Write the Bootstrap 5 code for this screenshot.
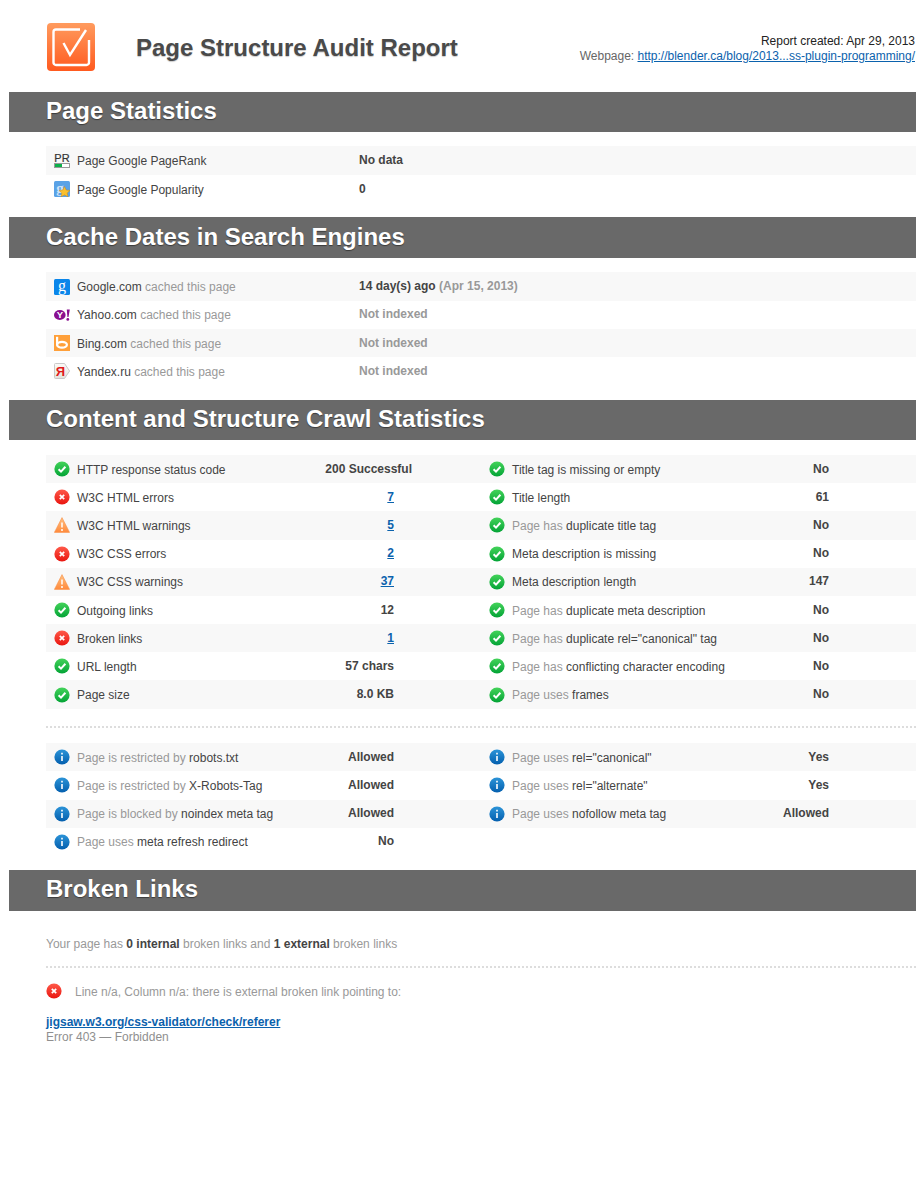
<!DOCTYPE html>
<html lang="en"><head><meta charset="utf-8"><title>Page Structure Audit Report</title>
<link href="https://cdn.jsdelivr.net/npm/bootstrap@5.3.0/dist/css/bootstrap.min.css" rel="stylesheet">
<style>
body{font-family:"Liberation Sans",Arial,sans-serif;font-size:12px;line-height:15px;color:#444;background:#fff}
.sheet{margin:0 8px 0 9px}
.top{height:92px;padding:23px 1px 0 38px}
.brand{width:48px;height:48px;flex:none}
.title{font-size:24px;line-height:50px;font-weight:700;margin:0 0 0 41px;color:#4a4a4a;text-shadow:0 1px 1px #ccc}
.meta{padding-top:11px;color:#222}
.meta .gr{color:#666}
a{color:#0b62ad}
.bar{background:#696969;height:40px;padding-left:37px;margin:0;font-size:24px;line-height:38px;font-weight:700;color:#fff;text-shadow:0 1px 1px rgba(0,0,0,.45)}
.bar2{height:41px}
.bar3{line-height:40px}
.group{margin-left:37px}
.g1{padding:14px 0}
.g2{padding:14.4px 0 14.6px}
.g3{padding-top:15px}
.g4{padding-bottom:13.55px}
.rw{height:28.25px}
.g3 .rw{height:28.2px}
.g1 .rw:first-child{height:29px}
.g1 .rw:last-child{height:28px}
.rw:nth-child(odd){background:#f8f8f8}
.cell{width:435px;flex:none;padding:0 87px 0 8px}
.wide{flex:1 1 auto;padding-right:0}
.ic{width:16px;height:16px;flex:none;margin-right:7px}
.lbl{padding-top:2px;white-space:nowrap}
.keyc{width:282px;flex:none}
.gy{color:#999}
.dk{color:#444}
.val{font-weight:700;white-space:nowrap}
.over{margin-right:-18px}
.dots{border-top:2px dotted #ddd;height:0}
.dm1{margin:17px 0 15.45px 37px}
.bl{padding:26px 0 0 37px}
.dm2{margin:14px 0 15px}
.err{margin-right:13px;width:16px;height:16px;flex:none}
.lk{margin-top:15px;font-weight:700}
.sub{color:#8f8f8f}
.lead-note{padding-top:2px}
svg text{font-family:"Liberation Sans",Arial,sans-serif}
svg text.srf{font-family:"Liberation Serif",serif}
</style></head><body>
<svg width="0" height="0" class="d-block" aria-hidden="true"><defs>
<linearGradient id="gg" x1="0" y1="0" x2="0" y2="1"><stop offset="0" stop-color="#44d35a"/><stop offset="1" stop-color="#03a336"/></linearGradient>
<linearGradient id="gr" x1="0" y1="0" x2="0" y2="1"><stop offset="0" stop-color="#ff5a4a"/><stop offset="1" stop-color="#e9150f"/></linearGradient>
<linearGradient id="gb" x1="0" y1="0" x2="0" y2="1"><stop offset="0" stop-color="#2c94d8"/><stop offset="1" stop-color="#045fae"/></linearGradient>
<linearGradient id="go" x1="0" y1="0" x2="0" y2="1"><stop offset="0" stop-color="#ffc080"/><stop offset="1" stop-color="#ff8a3c"/></linearGradient>
<linearGradient id="gl" x1="0" y1="0" x2="0" y2="1"><stop offset="0" stop-color="#ff9b5e"/><stop offset="1" stop-color="#ff5a1f"/></linearGradient>
<linearGradient id="gy1" x1="0" y1="0" x2="0" y2="1"><stop offset="0" stop-color="#fbfaf7"/><stop offset="1" stop-color="#e4e2dc"/></linearGradient>
<symbol id="ok" viewBox="0 0 16 16"><circle cx="8" cy="8" r="7.6" fill="url(#gg)"/><path d="M4.6 8.2 7 10.6 11.4 5.8" fill="none" stroke="#fff" stroke-width="2"/></symbol>
<symbol id="er" viewBox="0 0 16 16"><circle cx="8" cy="8" r="7.6" fill="url(#gr)"/><path d="M5.8 5.8 10.2 10.2M10.2 5.8 5.8 10.2" fill="none" stroke="#fff" stroke-width="1.7"/></symbol>
<symbol id="wa" viewBox="0 0 16 16"><path d="M8 .6 15.6 15.4H.4Z" fill="url(#go)" stroke="#f8924a" stroke-width=".6"/><path d="M8 5.5V10.5M8 12V14" stroke="#fff" stroke-width="1.5"/></symbol>
<symbol id="in" viewBox="0 0 16 16"><circle cx="8" cy="8" r="7.6" fill="url(#gb)"/><path d="M8 3.8V5.5M8 7V12" stroke="#fff" stroke-width="1.6"/></symbol>
<symbol id="pr" viewBox="0 0 16 16"><text x="8" y="8.5" font-size="11" font-weight="400" text-anchor="middle" fill="#333" stroke="#333" stroke-width=".2">PR</text><rect x=".5" y="10.5" width="15" height="4" fill="#fff" stroke="#999"/><rect x="1" y="11" width="7" height="3" fill="#0cb04a"/></symbol>
<symbol id="gp" viewBox="0 0 16 16"><rect width="16" height="16" rx="1.5" fill="#5aa2e6"/><text class="srf" x="6" y="12" font-size="15" font-weight="700" text-anchor="middle" fill="#cfe2f7">g</text><path d="M10.5 5.5 12.2 9 16 9.4 13.2 12 14 15.8 10.5 13.9 7 15.8 7.8 12 5 9.4 8.8 9Z" fill="#fbc02d" stroke="#c9881a" stroke-width=".5"/></symbol>
<symbol id="gg1" viewBox="0 0 16 16"><rect width="16" height="16" rx="1.5" fill="#0a86ea"/><text class="srf" x="8" y="12" font-size="16" text-anchor="middle" fill="#fff">g</text></symbol>
<symbol id="ya" viewBox="0 0 16 16"><ellipse cx="5.8" cy="8" rx="5.8" ry="5" fill="#8a0f8f"/><text x="5.8" y="11.4" font-size="9.5" font-weight="700" text-anchor="middle" fill="#fff">Y</text><path d="M12.8 2.5 15.8 2.5 14.5 10H13.4Z" fill="#8a0f8f"/><circle cx="13.8" cy="12.4" r="1.4" fill="#8a0f8f"/></symbol>
<symbol id="bi" viewBox="0 0 16 16"><rect width="16" height="16" fill="#ffa03a"/><path d="M3.1 1.8V10.5" stroke="#fff" stroke-width="2.2" fill="none"/><ellipse cx="8" cy="9.8" rx="4.9" ry="2.9" fill="none" stroke="#fff" stroke-width="2.2"/></symbol>
<symbol id="yx" viewBox="0 0 16 16"><path d="M1.5.5H10.5L15.6 8 10.5 15.5H1.5A1 1 0 0 1 .5 14.5V1.5A1 1 0 0 1 1.5.5Z" fill="url(#gy1)" stroke="#c9c9c9"/><text x="6.3" y="12.8" font-size="13" font-weight="700" text-anchor="middle" fill="#e01a1a">Я</text></symbol>
</defs></svg>
<div class="sheet">
<header class="top d-flex justify-content-between">
<div class="d-flex">
<svg class="brand" viewBox="0 0 48 48"><rect width="48" height="48" rx="4" fill="url(#gl)"/><path d="M33 6.5H9A2.5 2.5 0 0 0 6.5 9V39.5A2.5 2.5 0 0 0 9 42H39.5A2.5 2.5 0 0 0 42 39.5V17" fill="none" stroke="#fff" stroke-width="2.4"/><path d="M16.5 20 23 32 39 7" fill="none" stroke="#fff" stroke-width="2.4"/></svg>
<h1 class="title">Page Structure Audit Report</h1>
</div>
<div class="meta text-end"><div>Report created: Apr 29, 2013</div><div class="gr">Webpage: <a href="#">http://blender.ca/blog/2013...ss-plugin-programming/</a></div></div>
</header>

<h2 class="bar">Page Statistics</h2>
<div class="group g1">
<div class="rw d-flex"><div class="cell wide d-flex align-items-center"><svg class="ic"><use href="#pr"/></svg><span class="lbl keyc">Page Google PageRank</span><span class="val">No data</span></div></div>
<div class="rw d-flex"><div class="cell wide d-flex align-items-center"><svg class="ic"><use href="#gp"/></svg><span class="lbl keyc">Page Google Popularity</span><span class="val">0</span></div></div>
</div>

<h2 class="bar bar2 bar3">Cache Dates in Search Engines</h2>
<div class="group g2">
<div class="rw d-flex"><div class="cell wide d-flex align-items-center"><svg class="ic"><use href="#gg1"/></svg><span class="lbl keyc">Google.com <span class="gy">cached this page</span></span><span class="val">14 day(s) ago <span class="gy">(Apr 15, 2013)</span></span></div></div>
<div class="rw d-flex"><div class="cell wide d-flex align-items-center"><svg class="ic"><use href="#ya"/></svg><span class="lbl keyc">Yahoo.com <span class="gy">cached this page</span></span><span class="val gy">Not indexed</span></div></div>
<div class="rw d-flex"><div class="cell wide d-flex align-items-center"><svg class="ic"><use href="#bi"/></svg><span class="lbl keyc">Bing.com <span class="gy">cached this page</span></span><span class="val gy">Not indexed</span></div></div>
<div class="rw d-flex"><div class="cell wide d-flex align-items-center"><svg class="ic"><use href="#yx"/></svg><span class="lbl keyc">Yandex.ru <span class="gy">cached this page</span></span><span class="val gy">Not indexed</span></div></div>
</div>

<h2 class="bar">Content and Structure Crawl Statistics</h2>
<div class="group g3">
<div class="rw d-flex">
<div class="cell d-flex align-items-center"><svg class="ic"><use href="#ok"/></svg><span class="lbl flex-grow-1">HTTP response status code</span><span class="val over">200 Successful</span></div>
<div class="cell d-flex align-items-center"><svg class="ic"><use href="#ok"/></svg><span class="lbl flex-grow-1">Title tag is missing or empty</span><span class="val">No</span></div>
</div>
<div class="rw d-flex">
<div class="cell d-flex align-items-center"><svg class="ic"><use href="#er"/></svg><span class="lbl flex-grow-1">W3C HTML errors</span><span class="val"><a href="#">7</a></span></div>
<div class="cell d-flex align-items-center"><svg class="ic"><use href="#ok"/></svg><span class="lbl flex-grow-1">Title length</span><span class="val">61</span></div>
</div>
<div class="rw d-flex">
<div class="cell d-flex align-items-center"><svg class="ic"><use href="#wa"/></svg><span class="lbl flex-grow-1">W3C HTML warnings</span><span class="val"><a href="#">5</a></span></div>
<div class="cell d-flex align-items-center"><svg class="ic"><use href="#ok"/></svg><span class="lbl flex-grow-1"><span class="gy">Page has</span> duplicate title tag</span><span class="val">No</span></div>
</div>
<div class="rw d-flex">
<div class="cell d-flex align-items-center"><svg class="ic"><use href="#er"/></svg><span class="lbl flex-grow-1">W3C CSS errors</span><span class="val"><a href="#">2</a></span></div>
<div class="cell d-flex align-items-center"><svg class="ic"><use href="#ok"/></svg><span class="lbl flex-grow-1">Meta description is missing</span><span class="val">No</span></div>
</div>
<div class="rw d-flex">
<div class="cell d-flex align-items-center"><svg class="ic"><use href="#wa"/></svg><span class="lbl flex-grow-1">W3C CSS warnings</span><span class="val"><a href="#">37</a></span></div>
<div class="cell d-flex align-items-center"><svg class="ic"><use href="#ok"/></svg><span class="lbl flex-grow-1">Meta description length</span><span class="val">147</span></div>
</div>
<div class="rw d-flex">
<div class="cell d-flex align-items-center"><svg class="ic"><use href="#ok"/></svg><span class="lbl flex-grow-1">Outgoing links</span><span class="val">12</span></div>
<div class="cell d-flex align-items-center"><svg class="ic"><use href="#ok"/></svg><span class="lbl flex-grow-1"><span class="gy">Page has</span> duplicate meta description</span><span class="val">No</span></div>
</div>
<div class="rw d-flex">
<div class="cell d-flex align-items-center"><svg class="ic"><use href="#er"/></svg><span class="lbl flex-grow-1">Broken links</span><span class="val"><a href="#">1</a></span></div>
<div class="cell d-flex align-items-center"><svg class="ic"><use href="#ok"/></svg><span class="lbl flex-grow-1"><span class="gy">Page has</span> duplicate rel="canonical" tag</span><span class="val">No</span></div>
</div>
<div class="rw d-flex">
<div class="cell d-flex align-items-center"><svg class="ic"><use href="#ok"/></svg><span class="lbl flex-grow-1">URL length</span><span class="val">57 chars</span></div>
<div class="cell d-flex align-items-center"><svg class="ic"><use href="#ok"/></svg><span class="lbl flex-grow-1"><span class="gy">Page has</span> conflicting character encoding</span><span class="val">No</span></div>
</div>
<div class="rw d-flex">
<div class="cell d-flex align-items-center"><svg class="ic"><use href="#ok"/></svg><span class="lbl flex-grow-1">Page size</span><span class="val">8.0 KB</span></div>
<div class="cell d-flex align-items-center"><svg class="ic"><use href="#ok"/></svg><span class="lbl flex-grow-1"><span class="gy">Page uses</span> frames</span><span class="val">No</span></div>
</div>
</div>
<div class="dots dm1"></div>
<div class="group g4">
<div class="rw d-flex">
<div class="cell d-flex align-items-center"><svg class="ic"><use href="#in"/></svg><span class="lbl flex-grow-1"><span class="gy">Page is restricted by</span> robots.txt</span><span class="val">Allowed</span></div>
<div class="cell d-flex align-items-center"><svg class="ic"><use href="#in"/></svg><span class="lbl flex-grow-1"><span class="gy">Page uses</span> rel="canonical"</span><span class="val">Yes</span></div>
</div>
<div class="rw d-flex">
<div class="cell d-flex align-items-center"><svg class="ic"><use href="#in"/></svg><span class="lbl flex-grow-1"><span class="gy">Page is restricted by</span> X-Robots-Tag</span><span class="val">Allowed</span></div>
<div class="cell d-flex align-items-center"><svg class="ic"><use href="#in"/></svg><span class="lbl flex-grow-1"><span class="gy">Page uses</span> rel="alternate"</span><span class="val">Yes</span></div>
</div>
<div class="rw d-flex">
<div class="cell d-flex align-items-center"><svg class="ic"><use href="#in"/></svg><span class="lbl flex-grow-1"><span class="gy">Page is blocked by</span> noindex meta tag</span><span class="val">Allowed</span></div>
<div class="cell d-flex align-items-center"><svg class="ic"><use href="#in"/></svg><span class="lbl flex-grow-1"><span class="gy">Page uses</span> nofollow meta tag</span><span class="val">Allowed</span></div>
</div>
<div class="rw d-flex">
<div class="cell d-flex align-items-center"><svg class="ic"><use href="#in"/></svg><span class="lbl flex-grow-1"><span class="gy">Page uses</span> meta refresh redirect</span><span class="val">No</span></div>
</div>
</div>

<h2 class="bar bar2">Broken Links</h2>
<div class="bl">
<div class="gy">Your page has <b class="dk">0 internal</b> broken links and <b class="dk">1 external</b> broken links</div>
<div class="dots dm2"></div>
<div class="d-flex align-items-center"><svg class="err"><use href="#er"/></svg><span class="gy lead-note">Line n/a, Column n/a: there is external broken link pointing to:</span></div>
<div class="lk"><a href="#">jigsaw.w3.org/css-validator/check/referer</a></div>
<div class="sub">Error 403 — Forbidden</div>
</div>
</div>
</body></html>
